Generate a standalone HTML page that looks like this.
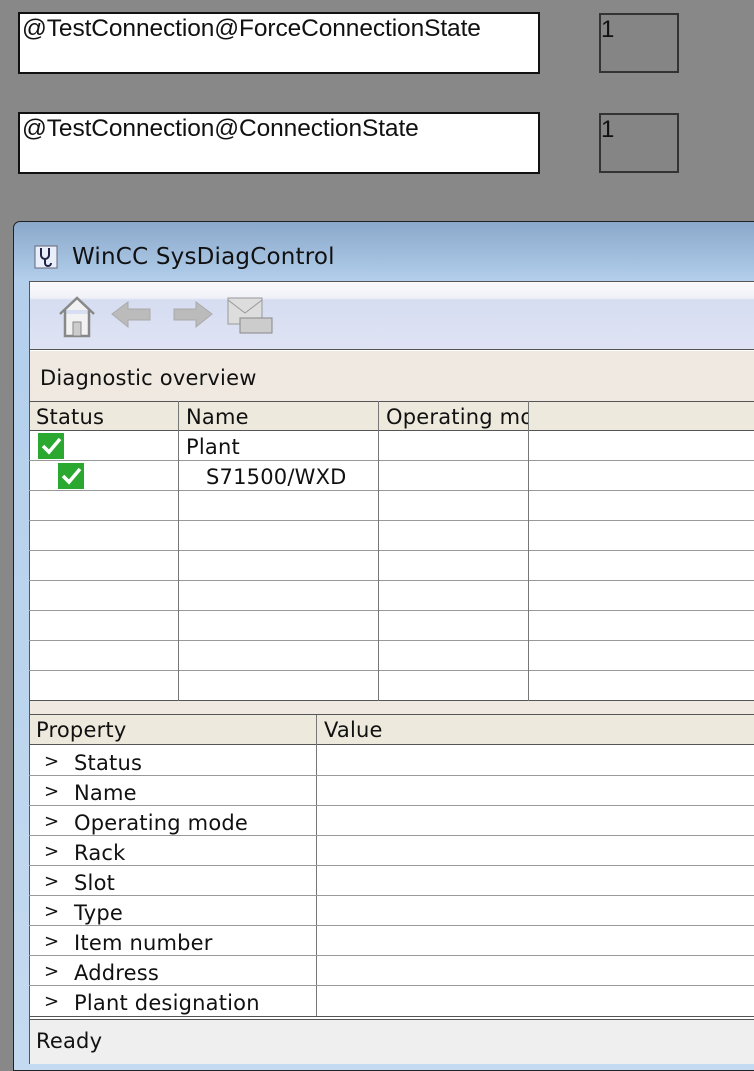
<!DOCTYPE html><html><head><style>
*{margin:0;padding:0;box-sizing:border-box}
body{width:754px;height:1064px;background:#888;position:relative;overflow:hidden;font-family:"DejaVu Sans","Liberation Sans",sans-serif;color:#111}
.a{position:absolute}
.tb{background:#fff;border:2px solid #111;font-family:"Liberation Sans",sans-serif;font-size:24.5px;padding:1px 0 0 2px;letter-spacing:-0.1px}
.nb{background:#858585;border:2px solid #333;font-family:"Liberation Sans",sans-serif;font-size:24px;padding:1px 0 0 0}
.hl{position:absolute;left:29px;width:725px;height:1px;background:#999}
.vl{position:absolute;width:1px;background:#777}
.t{position:absolute;font-size:21px;white-space:nowrap;letter-spacing:0.2px}
.chk{position:absolute;width:26px;height:26px;background:#2aa830}
</style></head><body>
<div class="a tb" style="left:18px;top:12px;width:522px;height:62px">@TestConnection@ForceConnectionState</div>
<div class="a nb" style="left:599px;top:13px;width:80px;height:60px">1</div>
<div class="a tb" style="left:18px;top:112px;width:522px;height:62px">@TestConnection@ConnectionState</div>
<div class="a nb" style="left:599px;top:113px;width:80px;height:60px">1</div>

<div class="a" style="left:13px;top:221px;width:760px;height:850px;background:linear-gradient(#8aa8ca,#b3cfec 60px,#c4daf0);border:1px solid #222;border-radius:7px 0 0 0"></div>
<svg class="a" style="left:34px;top:245px" width="24" height="24" viewBox="0 0 24 24"><rect x="1" y="1" width="22" height="22" fill="#e8eefa" stroke="#667" /><path d="M7 3v7a4 4 0 0 0 8 0V3M11 14v4a3 3 0 0 0 6 0" fill="none" stroke="#224" stroke-width="2"/></svg>
<div class="t" style="left:72px;top:244px;font-size:23px">WinCC SysDiagControl</div>

<div class="a" style="left:29px;top:281px;width:725px;height:783px;background:#fff;border-top:1px solid #555;border-left:1px solid #555"></div>
<div class="a" style="left:30px;top:282px;width:724px;height:68px;background:linear-gradient(#fafafd,#f0f0f8 16px,#d6ddf1 18px,#dfe3f4);border-bottom:1px solid #555"></div>
<svg class="a" style="left:56px;top:292px" width="222" height="48" viewBox="0 0 222 48">
<path d="M4 22L21 6L38 22M9 18v26h24V18" fill="#f2f2f2" stroke="#888" stroke-width="2.5"/><rect x="17" y="30" width="8" height="14" fill="#ccc" stroke="#888"/>
<path d="M56 22L72 10v7h22v11H72v7z" fill="#bbb" stroke="#aaa"/>
<path d="M156 22L140 10v7h-22v11h22v7z" fill="#bbb" stroke="#aaa"/>
<rect x="172" y="6" width="34" height="26" fill="#ddd" stroke="#999"/><path d="M172 8l17 13l17-13" fill="none" stroke="#999"/><rect x="184" y="26" width="32" height="15" fill="#ccc" stroke="#888"/>
</svg>
<div class="a" style="left:30px;top:351px;width:724px;height:50px;background:#efe9e1"></div>
<div class="t" style="left:40px;top:366px">Diagnostic overview</div>
<div class="a" style="left:30px;top:401px;width:724px;height:30px;background:#ede9dd;border-top:1px solid #555;border-bottom:1px solid #555"></div>
<div class="t" style="left:36px;top:405px">Status</div>
<div class="t" style="left:186px;top:405px">Name</div>
<div class="t" style="left:386px;top:405px;width:142px;overflow:hidden">Operating mode</div>
<div class="hl" style="top:460px"></div><div class="hl" style="top:490px"></div><div class="hl" style="top:520px"></div><div class="hl" style="top:550px"></div><div class="hl" style="top:580px"></div><div class="hl" style="top:610px"></div><div class="hl" style="top:640px"></div><div class="hl" style="top:670px"></div><div class="hl" style="top:700px;background:#555"></div>
<div class="vl" style="left:178px;top:401px;height:300px"></div>
<div class="vl" style="left:378px;top:401px;height:300px"></div>
<div class="vl" style="left:528px;top:401px;height:300px"></div>
<div class="chk" style="left:38px;top:433px"></div><svg class="a" style="left:38px;top:433px" width="26" height="26"><path d="M5 13l6 6l11-13" fill="none" stroke="#fff" stroke-width="3.5"/></svg>
<div class="chk" style="left:58px;top:463px"></div><svg class="a" style="left:58px;top:463px" width="26" height="26"><path d="M5 13l6 6l11-13" fill="none" stroke="#fff" stroke-width="3.5"/></svg>
<div class="t" style="left:186px;top:435px">Plant</div>
<div class="t" style="left:206px;top:465px">S71500/WXD</div>

<div class="a" style="left:30px;top:701px;width:724px;height:14px;background:#efe9e1;border-bottom:1px solid #555"></div>
<div class="a" style="left:30px;top:715px;width:724px;height:30px;background:#ede9dd;border-bottom:1px solid #555"></div>
<div class="vl" style="left:316px;top:715px;height:303px"></div>
<div class="t" style="left:36px;top:718px">Property</div>
<div class="t" style="left:324px;top:718px">Value</div>
<div class="hl" style="top:775px"></div><div class="hl" style="top:805px"></div><div class="hl" style="top:835px"></div><div class="hl" style="top:865px"></div><div class="hl" style="top:895px"></div><div class="hl" style="top:925px"></div><div class="hl" style="top:955px"></div><div class="hl" style="top:985px"></div>
<div class="t" style="left:44px;top:747px;line-height:30px;font-size:18px">&gt;<br>&gt;<br>&gt;<br>&gt;<br>&gt;<br>&gt;<br>&gt;<br>&gt;<br>&gt;</div>
<div class="t" style="left:74px;top:748px;line-height:30px">Status<br>Name<br>Operating mode<br>Rack<br>Slot<br>Type<br>Item number<br>Address<br>Plant designation</div>
<div class="a" style="left:30px;top:1016px;width:724px;height:4px;background:#fff;border-top:1px solid #555;border-bottom:1px solid #555"></div>
<div class="a" style="left:30px;top:1020px;width:724px;height:44px;background:#efefef"></div>
<div class="t" style="left:36px;top:1029px">Ready</div>
</body></html>
